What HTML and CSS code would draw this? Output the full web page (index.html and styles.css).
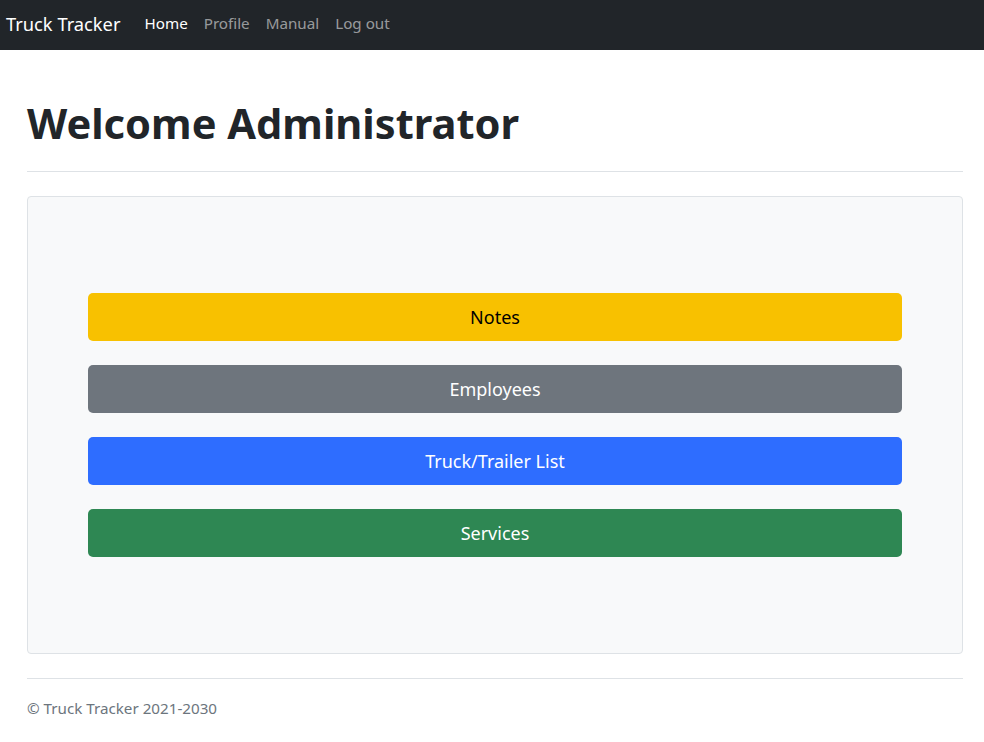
FILE: index.html
```html
<!DOCTYPE html>
<html lang="en">
<head>
<meta charset="utf-8">
<title>Truck Tracker</title>
<link rel="stylesheet" href="styles.css">
</head>
<body>
<nav class="navbar">
  <a class="brand" href="#">Truck Tracker</a>
  <ul class="nav">
    <li><a class="nav-link active" href="#">Home</a></li>
    <li><a class="nav-link" href="#">Profile</a></li>
    <li><a class="nav-link" href="#">Manual</a></li>
    <li><a class="nav-link" href="#">Log out</a></li>
  </ul>
</nav>
<main class="container">
  <h1 class="title">Welcome Administrator</h1>
  <hr class="rule">
  <section class="panel">
    <a class="btn btn-warning" href="#">Notes</a>
    <a class="btn btn-secondary" href="#">Employees</a>
    <a class="btn btn-primary" href="#">Truck/Trailer List</a>
    <a class="btn btn-success" href="#">Services</a>
  </section>
  <hr class="rule footer-rule">
  <footer class="footer">© Truck Tracker 2021-2030</footer>
</main>
</body>
</html>
```
FILE: styles.css
```css
* { box-sizing: border-box; }
html, body { margin: 0; padding: 0; }
body {
  font-family: "Noto Sans", "Open Sans", sans-serif;
  font-size: 16px;
  color: #212529;
  background: #fff;
}
a { text-decoration: none; }
.navbar {
  height: 50px;
  background: #212529;
  display: flex;
  align-items: center;
  padding: 0 6px 4px;
}
.brand {
  color: #fff;
  font-size: 18.3px;
  margin-right: 16px;
}
.nav {
  list-style: none;
  display: flex;
  margin: 0;
  padding: 0;
}
.nav-link {
  display: block;
  padding: 8px;
  font-size: 15.2px;
  color: rgba(255,255,255,0.55);
}
.nav-link.active { color: #fff; }
.container {
  padding: 0 21px 0 27px;
}
.title {
  font-size: 41.6px;
  font-weight: 700;
  line-height: 50px;
  margin: 48px 0 23px;
}
.rule {
  border: 0;
  border-top: 1px solid #dee2e6;
  margin: 0 0 24px 0;
}
.panel {
  background: #f8f9fa;
  border: 1px solid #dee2e6;
  border-radius: 4px;
  padding: 96px 60px;
  display: flex;
  flex-direction: column;
  gap: 24px;
  height: 458px;
}
.btn {
  display: flex;
  align-items: center;
  justify-content: center;
  height: 48px;
  border-radius: 5px;
  font-size: 18px;
  color: #fff;
}
.btn-warning { background: #f8c100; color: #000; }
.btn-secondary { background: #6e757d; }
.btn-primary { background: #2e6dff; }
.btn-success { background: #2e8753; }
.footer-rule { margin: 24px 0 0 0; }
.footer {
  color: #6c757d;
  font-size: 15.2px;
  padding-top: 19px;
}
```
